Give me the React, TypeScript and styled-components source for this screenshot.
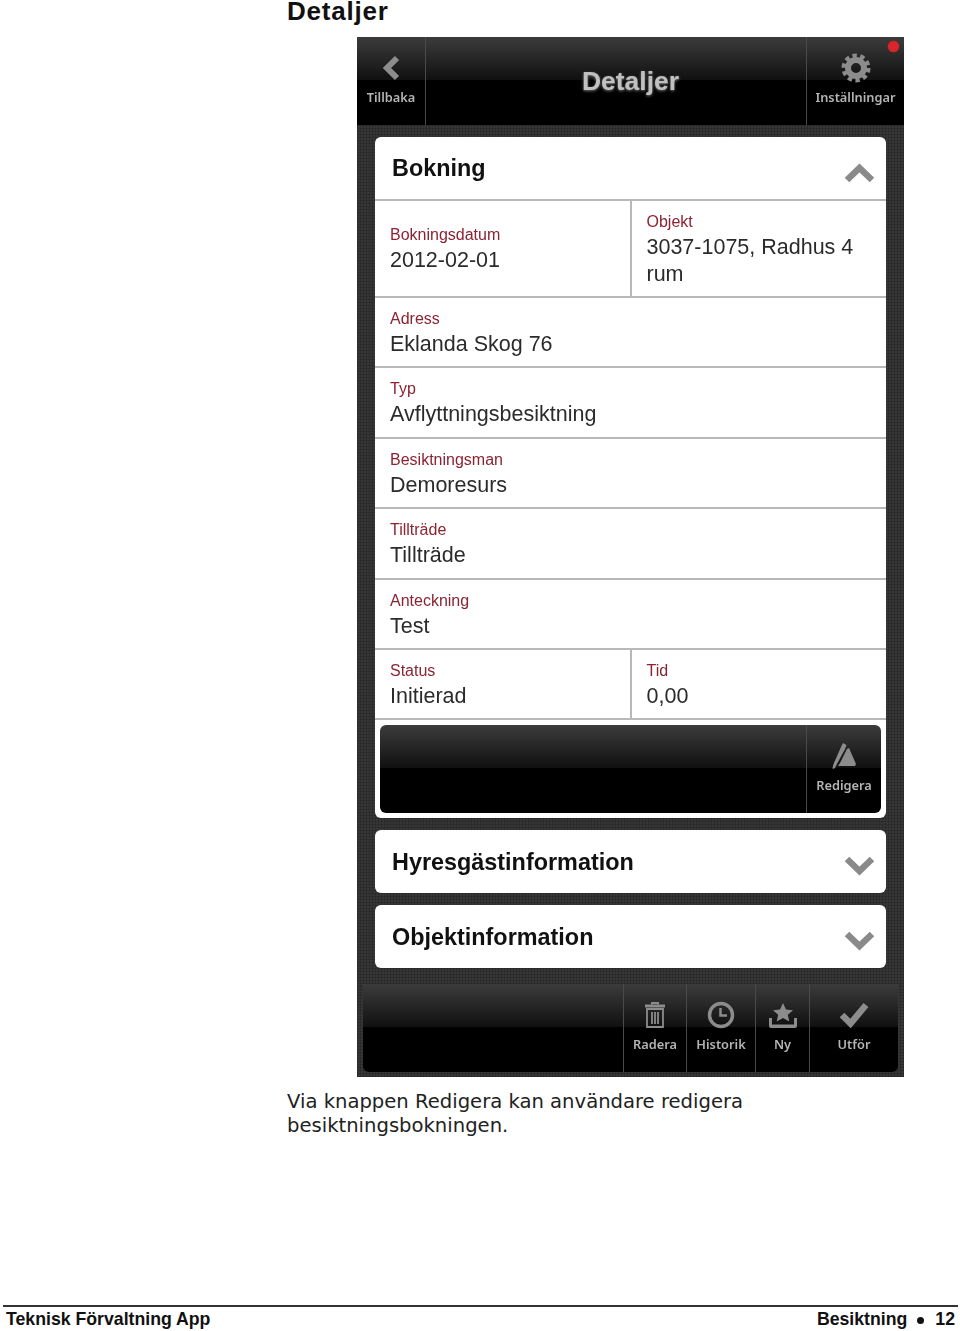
import styled, { createGlobalStyle } from 'styled-components'

const GlobalStyle = createGlobalStyle`
  html, body {
    margin: 0;
    padding: 0;
    background: #fff;
  }
`

const Page = styled.div`
  width: 960px;
  height: 1331px;
  display: flex;
  flex-direction: column;
  overflow: hidden;
  font-family: 'Liberation Sans', Arial, sans-serif;
`

const Content = styled.div`
  padding-left: 287px;
  display: flex;
  flex-direction: column;
`

const Heading = styled.h1`
  margin: 0 0 15px;
  font-size: 26px;
  line-height: 22px;
  letter-spacing: 0.8px;
  font-weight: bold;
  color: #111;
`

const Phone = styled.div`
  width: 547px;
  height: 1040px;
  margin-left: 70px;
  display: flex;
  flex-direction: column;
  filter: blur(0.4px);
  background-color: #363636;
  background-image:
    repeating-linear-gradient(0deg, rgba(0, 0, 0, 0.16) 0 1px, transparent 1px 3px),
    repeating-linear-gradient(90deg, rgba(0, 0, 0, 0.16) 0 1px, transparent 1px 3px);
`

const Bar = styled.div<{ $radius?: string }>`
  height: 88px;
  flex: none;
  display: flex;
  justify-content: flex-end;
  position: relative;
  overflow: hidden;
  border-radius: ${(props) => props.$radius || '0'};
  background: linear-gradient(#3b3b3b 0, #333 10%, #101010 49%, #000 49%, #000 100%);
`

const BarButton = styled.div<{ $width: number; $left?: boolean }>`
  width: ${(props) => props.$width}px;
  flex: none;
  box-sizing: border-box;
  display: flex;
  flex-direction: column;
  align-items: center;
  padding-top: 16px;
  border-left: ${(props) => (props.$left ? 'none' : '1px solid #4a4a4a')};
  border-right: ${(props) => (props.$left ? '1px solid #4a4a4a' : 'none')};
`

const BarIcon = styled.div`
  height: 30px;
  display: flex;
  align-items: center;
  justify-content: center;
  color: #8c8c8c;
`

const BarLabel = styled.div`
  margin-top: 5px;
  font-family: 'Noto Sans', 'Liberation Sans', sans-serif;
  font-size: 12.8px;
  line-height: 18px;
  font-weight: 600;
  color: #b4b4b4;
  white-space: nowrap;
  text-shadow: 0 1px 1px #000;
`

const BarTitle = styled.div`
  flex: 1;
  display: flex;
  justify-content: center;
  padding: 28px 0 0 29px;
  font-size: 26.5px;
  line-height: 32px;
  font-weight: bold;
  color: #c0c0c0;
  text-shadow: 0 1px 3px #777;
`

const Notice = styled.span`
  position: absolute;
  top: 4px;
  right: 5px;
  width: 11px;
  height: 11px;
  border-radius: 50%;
  background: #d8262c;
  box-shadow: 0 0 2px #a22;
`

const Cards = styled.div`
  flex: 1;
  padding: 12px 18px 0;
  display: flex;
  flex-direction: column;
  gap: 12px;
`

const Card = styled.div`
  background: #fff;
  border-radius: 6px;
  overflow: hidden;
`

const CardHeader = styled.div<{ $height: number }>`
  height: ${(props) => props.$height}px;
  box-sizing: border-box;
  display: flex;
  align-items: center;
  justify-content: space-between;
  padding: 1px 11px 0 17px;
  font-size: 23.4px;
  font-weight: bold;
  color: #111;
`

const ChevronBox = styled.div`
  display: flex;
  margin-top: 8px;
`

const Row = styled.div<{ $height: number }>`
  height: ${(props) => props.$height}px;
  box-sizing: border-box;
  display: flex;
  border-top: 2px solid #b8b8b8;
`

const Cell = styled.div`
  flex: 1;
  min-width: 0;
  box-sizing: border-box;
  display: flex;
  flex-direction: column;
  justify-content: center;
  padding: 3px 14px 0 15px;

  &:first-child:not(:last-child) {
    border-right: 2px solid #b8b8b8;
  }
`

const FieldLabel = styled.div`
  font-size: 16px;
  line-height: 18px;
  color: #8b2332;
`

const FieldValue = styled.div`
  margin-top: 3px;
  font-size: 21.5px;
  line-height: 27px;
  color: #2b2b2b;
`

const ActionWrap = styled.div`
  border-top: 2px solid #b8b8b8;
  padding: 5px;
`

const BottomBarWrap = styled.div`
  padding: 0 6px 5px;
`

const Caption = styled.p`
  margin: 13px 0 0;
  width: 480px;
  font-family: 'DejaVu Sans', Verdana, sans-serif;
  font-size: 19.6px;
  line-height: 24px;
  color: #222;
`

const Footer = styled.div`
  margin: auto 2px 0 3px;
  height: 26px;
  box-sizing: border-box;
  border-top: 2px solid #333;
  display: flex;
  justify-content: space-between;
  align-items: center;
  padding: 1px 3px 0 3px;
  font-size: 17.7px;
  font-weight: bold;
  color: #111;
`

const Dot = styled.span`
  display: inline-block;
  width: 7px;
  height: 7px;
  border-radius: 50%;
  background: #111;
  margin: 0 11px 0 10px;
  vertical-align: 1px;
`

const BackIcon = () => (
  <svg width="20" height="26" viewBox="0 0 20 26" fill="none" stroke="#8c8c8c" strokeWidth="6">
    <path d="M16 3L6 13l10 10" />
  </svg>
)

const Chevron = ({ up }: { up?: boolean }) => (
  <svg width="31" height="20" viewBox="0 0 31 20" fill="none" stroke="#8a8a8a" strokeWidth="6.500">
    <path d={up ? 'M3 17L15.500 5 28 17' : 'M3 3l12.500 12L28 3'} />
  </svg>
)

const GearIcon = () => (
  <svg width="30" height="30" viewBox="0 0 30 30" fill="none" stroke="#8c8c8c">
    <circle cx="15" cy="15" r="8" strokeWidth="6" />
    <circle cx="15" cy="15" r="12" strokeWidth="5" strokeDasharray="4.200 3.340" />
  </svg>
)

const EditIcon = () => (
  <svg width="26" height="28" viewBox="0 0 26 28" fill="#8c8c8c">
    <path d="M12 1l3.500 2-1.500 4L6 22l-2 4-2 1-.5-1 1-4L10 5z" />
    <path d="M16 7l2-1 7 16-1 2H7l2-3z" />
  </svg>
)

const TrashIcon = () => (
  <svg width="24" height="28" viewBox="0 0 24 28" fill="none" stroke="#8c8c8c" strokeWidth="2">
    <path d="M9 3.500V2h6v1.500" />
    <path d="M2 5h20" strokeWidth="3" />
    <path d="M4 8h16v18H4zM9 11v12M12 11v12M15 11v12" strokeWidth="1.800" />
  </svg>
)

const ClockIcon = () => (
  <svg width="28" height="28" viewBox="0 0 28 28" fill="none" stroke="#8c8c8c">
    <circle cx="14" cy="14" r="11.500" strokeWidth="3.500" />
    <path d="M13.500 7v7.500H20" strokeWidth="2.500" />
  </svg>
)

const InboxStarIcon = () => (
  <svg width="30" height="26" viewBox="0 0 30 26" fill="#8c8c8c">
    <path d="M15 1l3 6.500 7 .7-5.200 4.600 1.500 6.700L15 16l-6.300 3.500 1.500-6.700L5 8.200l7-.7z" />
    <path d="M1 16h3v6.500h22V16h3v8a2 2 0 0 1-2 2H3a2 2 0 0 1-2-2z" />
  </svg>
)

const CheckIcon = () => (
  <svg width="30" height="26" viewBox="0 0 30 26" fill="none" stroke="#8c8c8c" strokeWidth="6.500">
    <path d="M3 13l8.500 8.500L27 3" />
  </svg>
)

const fields = [
  { label: 'Adress', value: 'Eklanda Skog 76', height: 70 },
  { label: 'Typ', value: 'Avflyttningsbesiktning', height: 71 },
  { label: 'Besiktningsman', value: 'Demoresurs', height: 70 },
  { label: 'Tillträde', value: 'Tillträde', height: 71 },
  { label: 'Anteckning', value: 'Test', height: 70 },
]

const App = () => {
  return (
    <Page>
      <GlobalStyle />
      <Content>
        <Heading>Detaljer</Heading>
        <Phone>
          <Bar>
            <BarButton $width={69} $left>
              <BarIcon>
                <BackIcon />
              </BarIcon>
              <BarLabel>Tillbaka</BarLabel>
            </BarButton>
            <BarTitle>Detaljer</BarTitle>
            <BarButton $width={98}>
              <BarIcon>
                <GearIcon />
              </BarIcon>
              <BarLabel>Inställningar</BarLabel>
            </BarButton>
            <Notice />
          </Bar>
          <Cards>
            <Card>
              <CardHeader $height={62}>
                Bokning
                <ChevronBox>
                  <Chevron up />
                </ChevronBox>
              </CardHeader>
              <Row $height={97}>
                <Cell>
                  <FieldLabel>Bokningsdatum</FieldLabel>
                  <FieldValue>2012-02-01</FieldValue>
                </Cell>
                <Cell>
                  <FieldLabel>Objekt</FieldLabel>
                  <FieldValue>3037-1075, Radhus 4 rum</FieldValue>
                </Cell>
              </Row>
              {fields.map((field) => (
                <Row $height={field.height} key={field.label}>
                  <Cell>
                    <FieldLabel>{field.label}</FieldLabel>
                    <FieldValue>{field.value}</FieldValue>
                  </Cell>
                </Row>
              ))}
              <Row $height={70}>
                <Cell>
                  <FieldLabel>Status</FieldLabel>
                  <FieldValue>Initierad</FieldValue>
                </Cell>
                <Cell>
                  <FieldLabel>Tid</FieldLabel>
                  <FieldValue>0,00</FieldValue>
                </Cell>
              </Row>
              <ActionWrap>
                <Bar $radius="6px">
                  <BarButton $width={75}>
                    <BarIcon>
                      <EditIcon />
                    </BarIcon>
                    <BarLabel>Redigera</BarLabel>
                  </BarButton>
                </Bar>
              </ActionWrap>
            </Card>
            <Card>
              <CardHeader $height={63}>
                Hyresgästinformation
                <ChevronBox>
                  <Chevron />
                </ChevronBox>
              </CardHeader>
            </Card>
            <Card>
              <CardHeader $height={63}>
                Objektinformation
                <ChevronBox>
                  <Chevron />
                </ChevronBox>
              </CardHeader>
            </Card>
          </Cards>
          <BottomBarWrap>
            <Bar $radius="0 0 6px 6px">
              <BarButton $width={63}>
                <BarIcon>
                  <TrashIcon />
                </BarIcon>
                <BarLabel>Radera</BarLabel>
              </BarButton>
              <BarButton $width={69}>
                <BarIcon>
                  <ClockIcon />
                </BarIcon>
                <BarLabel>Historik</BarLabel>
              </BarButton>
              <BarButton $width={54}>
                <BarIcon>
                  <InboxStarIcon />
                </BarIcon>
                <BarLabel>Ny</BarLabel>
              </BarButton>
              <BarButton $width={89}>
                <BarIcon>
                  <CheckIcon />
                </BarIcon>
                <BarLabel>Utför</BarLabel>
              </BarButton>
            </Bar>
          </BottomBarWrap>
        </Phone>
        <Caption>Via knappen Redigera kan användare redigera besiktningsbokningen.</Caption>
      </Content>
      <Footer>
        <span>Teknisk Förvaltning App</span>
        <span>
          Besiktning
          <Dot />
          12
        </span>
      </Footer>
    </Page>
  )
}

export default App
